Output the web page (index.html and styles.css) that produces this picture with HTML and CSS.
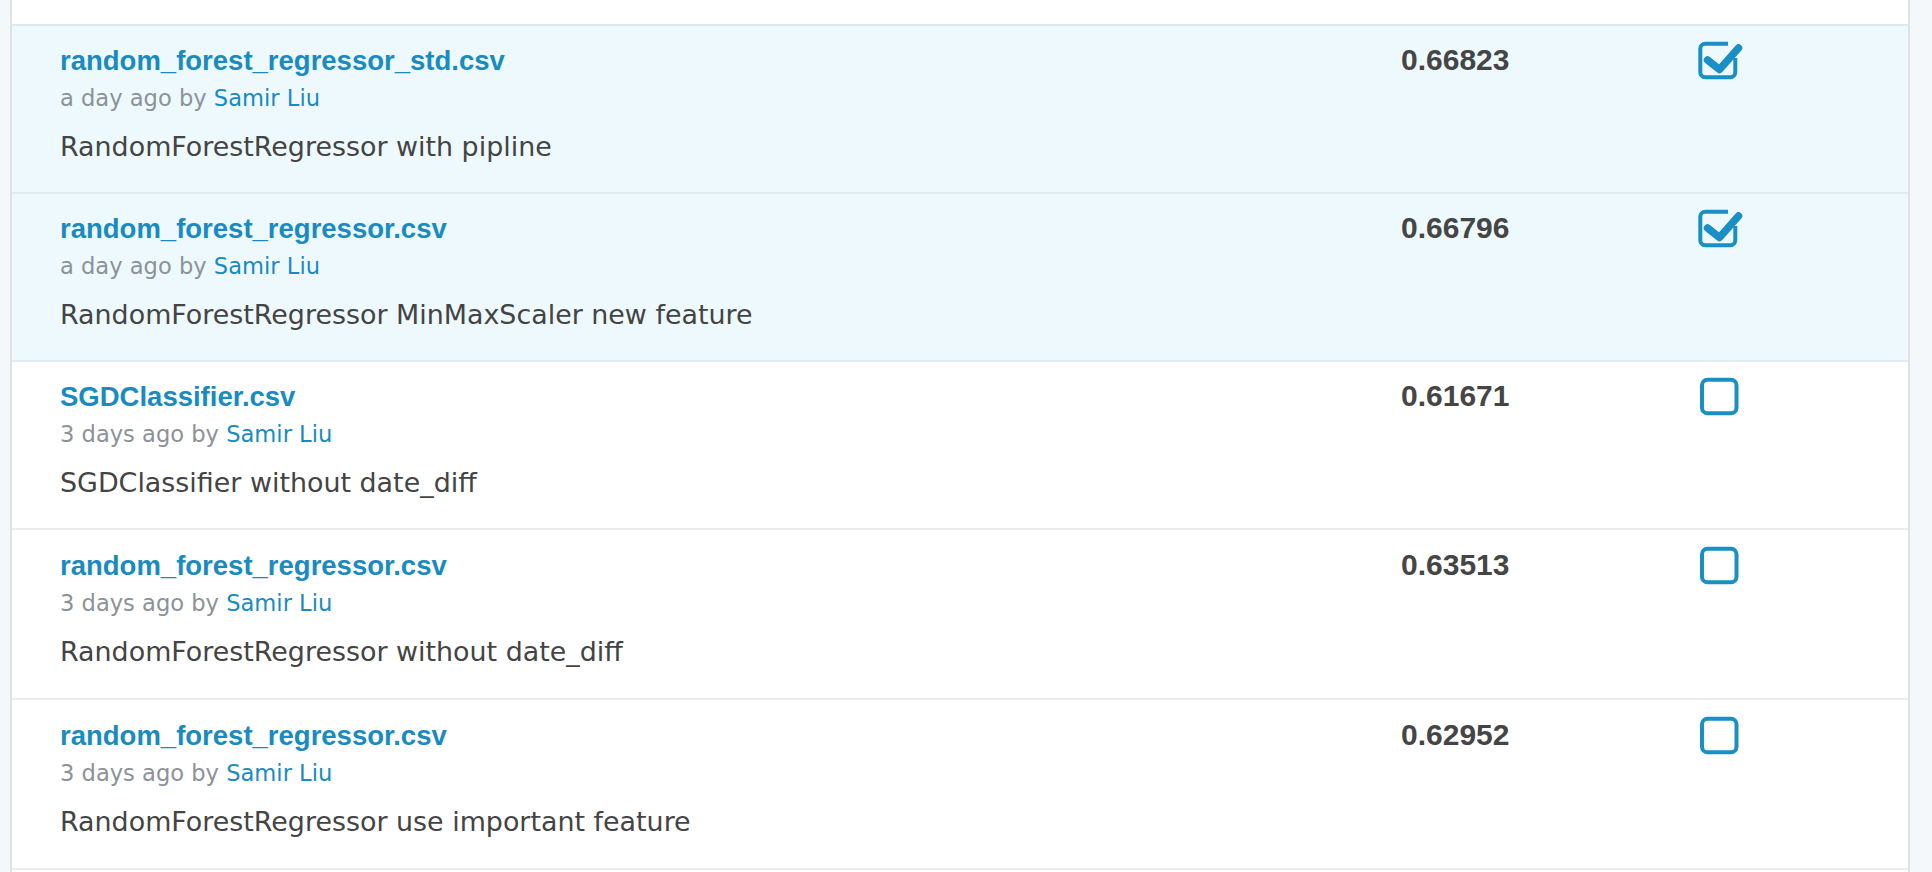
FILE: index.html
```html
<!DOCTYPE html>
<html lang="en">
<head>
<meta charset="utf-8">
<title>Submissions</title>
<link rel="stylesheet" href="styles.css">
</head>
<body>
<div class="card">
  <div class="top-space"></div>
  <div class="submissions">
    <div class="row selected">
      <div class="info">
        <a class="title" href="#">random_forest_regressor_std.csv</a>
        <div class="meta">a day ago by <a class="author" href="#">Samir Liu</a></div>
        <div class="desc">RandomForestRegressor with pipline</div>
      </div>
      <div class="score">0.66823</div>
      <div class="check">
        <svg class="box" width="46" height="42" viewBox="0 0 46 42"><path class="frame" d="M31 4.7H8.3A5 5 0 0 0 3.3 9.7V33.3A5 5 0 0 0 8.3 38.3H33.3A5 5 0 0 0 38.3 33.3V19"/><polyline class="tick" points="10.5,21 22.5,30.5 41.5,9"/></svg>
      </div>
    </div>
    <div class="row selected">
      <div class="info">
        <a class="title" href="#">random_forest_regressor.csv</a>
        <div class="meta">a day ago by <a class="author" href="#">Samir Liu</a></div>
        <div class="desc">RandomForestRegressor MinMaxScaler new feature</div>
      </div>
      <div class="score">0.66796</div>
      <div class="check">
        <svg class="box" width="46" height="42" viewBox="0 0 46 42"><path class="frame" d="M31 4.7H8.3A5 5 0 0 0 3.3 9.7V33.3A5 5 0 0 0 8.3 38.3H33.3A5 5 0 0 0 38.3 33.3V19"/><polyline class="tick" points="10.5,21 22.5,30.5 41.5,9"/></svg>
      </div>
    </div>
    <div class="row">
      <div class="info">
        <a class="title" href="#">SGDClassifier.csv</a>
        <div class="meta">3 days ago by <a class="author" href="#">Samir Liu</a></div>
        <div class="desc">SGDClassifier without date_diff</div>
      </div>
      <div class="score">0.61671</div>
      <div class="check">
        <svg class="box" width="46" height="42" viewBox="0 0 46 42"><rect class="frame" x="5" y="4.7" width="34.5" height="33.5" rx="5.5"/></svg>
      </div>
    </div>
    <div class="row tall">
      <div class="info">
        <a class="title" href="#">random_forest_regressor.csv</a>
        <div class="meta">3 days ago by <a class="author" href="#">Samir Liu</a></div>
        <div class="desc">RandomForestRegressor without date_diff</div>
      </div>
      <div class="score">0.63513</div>
      <div class="check">
        <svg class="box" width="46" height="42" viewBox="0 0 46 42"><rect class="frame" x="5" y="4.7" width="34.5" height="33.5" rx="5.5"/></svg>
      </div>
    </div>
    <div class="row tall">
      <div class="info">
        <a class="title" href="#">random_forest_regressor.csv</a>
        <div class="meta">3 days ago by <a class="author" href="#">Samir Liu</a></div>
        <div class="desc">RandomForestRegressor use important feature</div>
      </div>
      <div class="score">0.62952</div>
      <div class="check">
        <svg class="box" width="46" height="42" viewBox="0 0 46 42"><rect class="frame" x="5" y="4.7" width="34.5" height="33.5" rx="5.5"/></svg>
      </div>
    </div>
  </div>
</div>
</body>
</html>
```

FILE: styles.css
```css
html, body {
  margin: 0;
  padding: 0;
}

body {
  background: #f5f8fa;
  font-family: "DejaVu Sans", sans-serif;
  overflow: hidden;
}

.card {
  box-sizing: border-box;
  width: 1900px;
  min-height: 100vh;
  margin-left: 10px;
  background: #ffffff;
  border-left: 2px solid #dfe2e5;
  border-right: 2px solid #dfe2e5;
}

.top-space {
  height: 24px;
}

.submissions {
  border-bottom: 2px solid #ececec;
}

.row {
  display: grid;
  grid-template-columns: 1341px 296px 1fr;
  align-items: start;
  padding: 18px 0 28px 48px;
  border-top: 2px solid #ececec;
}

.row.tall {
  padding-top: 19px;
  padding-bottom: 29px;
}

.row.selected {
  background: #eef9fe;
  border-top-color: #dce9f0;
}

.row.selected + .row {
  border-top-color: #e1ebf0;
}

.info {
  display: flex;
  flex-direction: column;
  align-items: flex-start;
}

.title {
  font-family: "Liberation Sans", Arial, sans-serif;
  font-weight: 700;
  font-size: 27.5px;
  line-height: 34px;
  color: #1a8bc0;
  text-decoration: none;
}

.meta {
  margin-top: 5px;
  font-size: 22.6px;
  line-height: 30px;
  color: #8c9297;
}

.author {
  color: #1a8bc0;
  text-decoration: none;
}

.desc {
  margin-top: 17px;
  font-size: 26.9px;
  line-height: 34px;
  color: #444444;
}

.score {
  font-family: "Liberation Sans", Arial, sans-serif;
  font-weight: 700;
  font-size: 30px;
  line-height: 32px;
  color: #454545;
}

.check {
  margin-top: -5px;
}

.box {
  display: block;
}

.frame {
  fill: none;
  stroke: #1a8fc4;
  stroke-width: 4;
}

.tick {
  fill: none;
  stroke: #1a8fc4;
  stroke-width: 7.5;
  stroke-linecap: round;
  stroke-linejoin: round;
}
```
